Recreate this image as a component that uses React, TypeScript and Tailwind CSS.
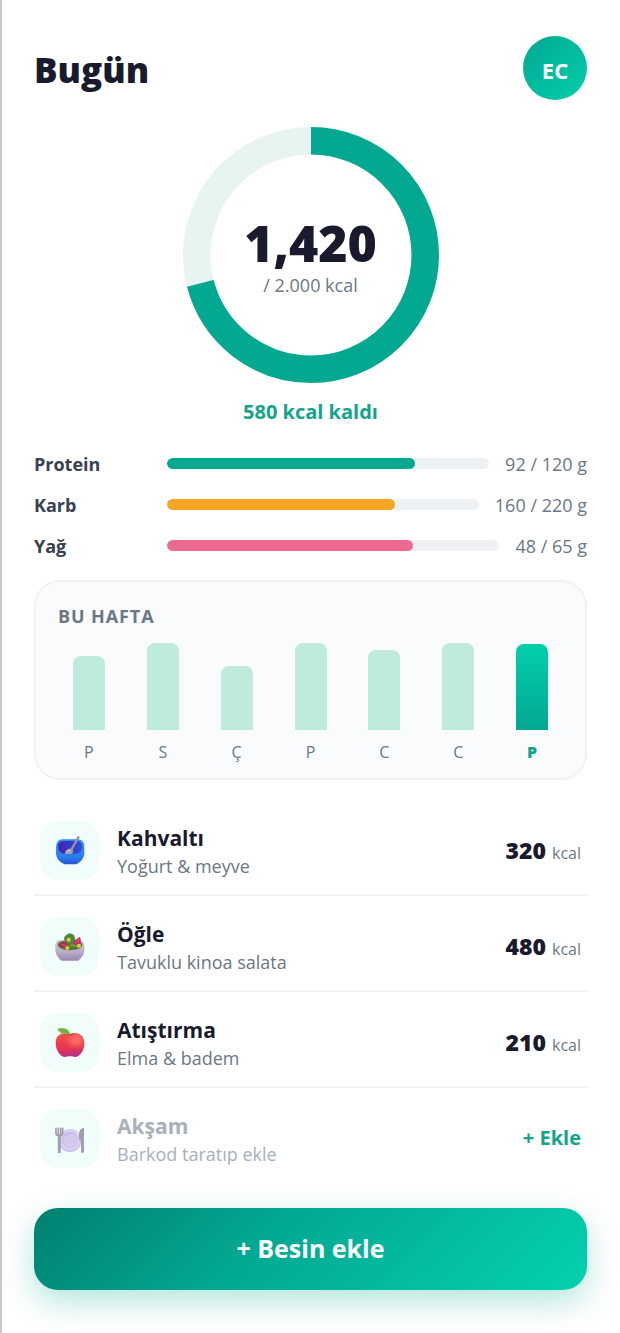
import type { ReactNode } from 'react';

interface Macro {
    label: string;
    value: number;
    goal: number;
    percent: number;
    color: string;
}

interface Meal {
    title: string;
    detail: string;
    kcal?: number;
    icon: ReactNode;
}

const macros: Macro[] = [
    { label: 'Protein', value: 92, goal: 120, percent: 77, color: 'bg-[#03a891]' },
    { label: 'Karb', value: 160, goal: 220, percent: 73, color: 'bg-[#f5a623]' },
    { label: 'Yağ', value: 48, goal: 65, percent: 74, color: 'bg-[#ec6a8f]' },
];

const week = [
    { day: 'P', height: 74 },
    { day: 'S', height: 87 },
    { day: 'Ç', height: 64 },
    { day: 'P', height: 87 },
    { day: 'C', height: 80 },
    { day: 'C', height: 87 },
    { day: 'P', height: 86, today: true },
];

function BowlIcon() {
    return (
        <svg viewBox="0 0 90 90" className="w-[30px] h-[30px]" aria-hidden="true">
            <defs>
                <linearGradient id="bowl-body" x1="0" y1="0" x2="0" y2="1">
                    <stop offset="0.3" stopColor="#2f8ff3" />
                    <stop offset="0.75" stopColor="#2878ec" />
                    <stop offset="1" stopColor="#2b50cf" />
                </linearGradient>
                <linearGradient id="bowl-inner" x1="0" y1="0" x2="1" y2="0">
                    <stop offset="0" stopColor="#4323b0" />
                    <stop offset="1" stopColor="#2c50dc" />
                </linearGradient>
            </defs>
            <path d="M22 13H68Q88 14 88 36V56Q86 76 64 88H28Q5 77 3 56V36Q4 14 22 13Z" fill="url(#bowl-body)" />
            <path d="M24 18H66Q82 20 82 36Q82 50 66 56H24Q9 51 9 36Q9 20 24 18Z" fill="url(#bowl-inner)" />
            <path d="M30 57Q29 48 38 43Q48 38 53 44Q57 51 49 57Z" fill="#aaa0ac" />
            <path d="M48 46L70 7" stroke="#9b91a0" strokeWidth="7" strokeLinecap="round" />
            <path d="M36 51Q40 45 48 46" fill="none" stroke="#d4cbd5" strokeWidth="3" />
        </svg>
    );
}

function SaladIcon() {
    return (
        <svg viewBox="0 0 90 90" className="w-[30px] h-[30px]" aria-hidden="true">
            <defs>
                <linearGradient id="salad-bowl" x1="0" y1="0" x2="0" y2="1">
                    <stop offset="0" stopColor="#d3c9df" />
                    <stop offset="0.6" stopColor="#b9aaca" />
                    <stop offset="1" stopColor="#9c88b0" />
                </linearGradient>
            </defs>
            <path d="M1 42Q1 27 20 26H68Q88 27 88 42V60Q86 77 69 89H20Q4 78 1 60Z" fill="url(#salad-bowl)" />
            <path d="M8 42Q9 32 22 31H68Q81 33 82 42Q80 57 45 58Q11 57 8 42Z" fill="#4f7a2b" />
            <path d="M28 28Q25 16 35 12Q42 4 51 9Q61 13 60 25L68 36Q55 47 42 44Z" fill="#4c8a3b" />
            <path d="M12 42L26 29Q36 33 41 44Q28 51 15 47Z" fill="#b62c51" />
            <path d="M53 32L75 17Q80 29 76 42Q65 44 58 39Z" fill="#c6315d" />
            <path d="M20 40L35 44M62 33L73 27" stroke="#e05780" strokeWidth="3" />
            <path d="M44 47Q56 39 68 48" fill="none" stroke="#76a139" strokeWidth="5" />
            <circle cx="41" cy="26" r="6" fill="#f2c63b" />
            <circle cx="37" cy="51" r="6" fill="#f5bd38" />
            <circle cx="72" cy="44" r="6" fill="#f2c63b" />
        </svg>
    );
}

function AppleIcon() {
    return (
        <svg viewBox="0 0 90 90" className="w-[30px] h-[30px]" aria-hidden="true">
            <defs>
                <linearGradient id="apple-body" x1="0.4" y1="0" x2="0.5" y2="1">
                    <stop offset="0" stopColor="#f6504b" />
                    <stop offset="0.65" stopColor="#e63350" />
                    <stop offset="1" stopColor="#b52c91" />
                </linearGradient>
                <radialGradient id="apple-light" cx="0.72" cy="0.3" r="0.4">
                    <stop offset="0" stopColor="#ff7169" />
                    <stop offset="1" stopColor="#ff7169" stopOpacity="0" />
                </radialGradient>
            </defs>
            <path d="M45 22C57 14 88 17 88 49C88 72 73 91 60 90C54 87 36 87 30 90C17 90 2 71 2 48C2 17 33 14 45 22Z" fill="url(#apple-body)" />
            <path d="M45 22C57 14 88 17 88 49C88 72 73 91 60 90C54 87 36 87 30 90C17 90 2 71 2 48C2 17 33 14 45 22Z" fill="url(#apple-light)" />
            <path d="M36 21Q45 26 54 21" fill="none" stroke="#a92c38" strokeWidth="3" />
            <path d="M7 5Q30 0 39 9Q45 15 45 23Q27 22 18 18Q8 12 7 5Z" fill="#79b843" />
            <path d="M14 8Q31 10 43 21" fill="none" stroke="#5a9b36" strokeWidth="2" />
        </svg>
    );
}

function PlateIcon() {
    return (
        <svg viewBox="0 0 90 90" className="w-[30px] h-[30px] opacity-60" aria-hidden="true">
            <circle cx="45" cy="53" r="34" fill="#b48fdc" />
            <circle cx="45" cy="51" r="32" fill="#ccb0ec" />
            <circle cx="45" cy="51" r="23" fill="#ab89d6" />
            <circle cx="46" cy="53" r="21" fill="#c3a5e6" />
            <path d="M3 16V31Q3 38 13 38Q23 38 23 31V16M10 16V35M17 16V35" fill="none" stroke="#6e617b" strokeWidth="5" strokeLinecap="round" />
            <path d="M13 38V88" stroke="#6e617b" strokeWidth="9" strokeLinecap="round" />
            <path d="M87 15Q75 15 72 31V49Q73 53 78 54V87Q82 93 87 87Z" fill="#6e617b" />
        </svg>
    );
}

const meals: Meal[] = [
    { title: 'Kahvaltı', detail: 'Yoğurt & meyve', kcal: 320, icon: <BowlIcon /> },
    { title: 'Öğle', detail: 'Tavuklu kinoa salata', kcal: 480, icon: <SaladIcon /> },
    { title: 'Atıştırma', detail: 'Elma & badem', kcal: 210, icon: <AppleIcon /> },
    { title: 'Akşam', detail: 'Barkod taratıp ekle', icon: <PlateIcon /> },
];

function CalorieRing() {
    return (
        <div className="grid place-items-center">
            <svg viewBox="0 0 256 256" className="col-start-1 row-start-1 w-64 h-64 -rotate-90" aria-hidden="true">
                <circle cx="128" cy="128" r="114.25" fill="none" stroke="#e8f4f2" strokeWidth="27.5" />
                <circle
                    cx="128"
                    cy="128"
                    r="114.25"
                    fill="none"
                    stroke="#03a891"
                    strokeWidth="27.5"
                    pathLength="100"
                    strokeDasharray="71 100"
                />
            </svg>
            <div className="col-start-1 row-start-1 text-center pt-1">
                <div className="text-[50px] leading-[56px] font-black text-[#1a1a2e]">1,420</div>
                <div className="text-lg leading-7 text-[#6b7785]">/ 2.000 kcal</div>
            </div>
        </div>
    );
}

function MacroRow({ label, value, goal, percent, color }: Macro) {
    return (
        <div className="flex items-center gap-4 h-[25px]">
            <span className="w-[117px] text-lg font-bold text-[#374151]">{label}</span>
            <div className="flex-1 h-[11px] rounded-full bg-[#eef1f3] overflow-hidden">
                <div className={`h-full rounded-full ${color}`} style={{ width: `${percent}%` }} />
            </div>
            <span className="text-lg text-[#6b7785]">{value} / {goal} g</span>
        </div>
    );
}

function MealRow({ title, detail, kcal, icon }: Meal) {
    const logged = kcal !== undefined;
    return (
        <li className="flex items-center gap-[18px] px-[6px] pt-5 pb-[14px] border-b-2 border-[#f0f2f4] last:border-b-0">
            <div className="w-[59px] h-[59px] shrink-0 rounded-[18px] bg-[#f0fdfa] flex items-center justify-center">{icon}</div>
            <div className="flex-1 pt-1">
                <h3 className={`text-[21px] leading-7 font-bold ${logged ? 'text-[#1a1a2e]' : 'text-[#a9b0bc]'}`}>{title}</h3>
                <p className={`text-lg leading-7 ${logged ? 'text-[#6b7785]' : 'text-[#a9b0bc]'}`}>{detail}</p>
            </div>
            {logged ? (
                <div className="flex items-baseline gap-[6px] text-base text-[#6b7785]">
                    <span className="text-[23px] leading-8 font-extrabold text-[#1a1a2e]">{kcal}</span>
                    <span>kcal</span>
                </div>
            ) : (
                <button type="button" className="text-xl font-bold text-[#14a38b]">+ Ekle</button>
            )}
        </li>
    );
}

export default function App() {
    return (
        <main className="min-h-screen bg-white border-l-2 border-[#c8c8c8] pl-8 pr-[33px] pt-9 pb-[43px] font-['Open_Sans','Noto_Sans',sans-serif]">
            <header className="flex items-center justify-between">
                <h1 className="pt-1 text-[35px] leading-[44px] font-extrabold text-[#1a1a2e]">Bugün</h1>
                <div className="w-16 h-16 pt-1 rounded-full bg-linear-135 from-[#03a891] to-[#03cfac] flex items-center justify-center text-[22px] font-bold text-white">
                    EC
                </div>
            </header>

            <section className="mt-[27px]">
                <CalorieRing />
                <p className="mt-[15px] text-center text-xl leading-7 font-bold text-[#14a38b]">580 kcal kaldı</p>
            </section>

            <section className="mt-[25px] flex flex-col gap-4">
                {macros.map(macro => (
                    <MacroRow key={macro.label} {...macro} />
                ))}
            </section>

            <section className="mt-[22px] rounded-[26px] border-2 border-[#f0f3f5] bg-[#f9fbfd] px-[22px] pt-5 pb-[14px]">
                <h2 className="text-lg leading-7 font-bold tracking-wider text-[#6b7785]">BU HAFTA</h2>
                <div className="mt-[13px] flex items-end gap-3">
                    {week.map((entry, i) => (
                        <div key={i} className="flex-1 flex flex-col items-center gap-[10px]">
                            <div
                                className={`w-8 rounded-t-lg ${entry.today ? 'bg-linear-to-b from-[#03cfac] to-[#03a891]' : 'bg-[#bfeade]'}`}
                                style={{ height: entry.height }}
                            />
                            <span className={`text-base leading-6 ${entry.today ? 'font-extrabold text-[#14a38b]' : 'text-[#6b7785]'}`}>
                                {entry.day}
                            </span>
                        </div>
                    ))}
                </div>
            </section>

            <ul className="mt-5">
                {meals.map(meal => (
                    <MealRow key={meal.title} {...meal} />
                ))}
            </ul>

            <button
                type="button"
                className="mt-[26px] w-full h-[82px] rounded-3xl bg-linear-135 from-[#00806f] via-[#03a891] via-40% to-[#03d1ae] text-[25px] font-bold text-white shadow-[0_12px_32px_rgba(3,168,145,0.3)]"
            >
                + Besin ekle
            </button>
        </main>
    );
}
